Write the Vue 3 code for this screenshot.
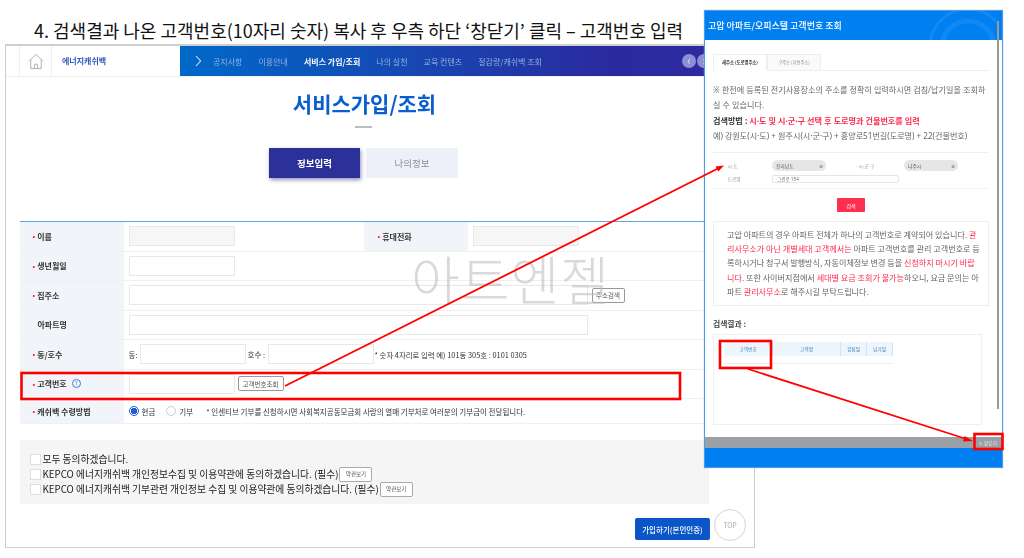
<script setup>
const navItems = [
  { label: '공지사항' },
  { label: '이용안내' },
  { label: '서비스 가입/조회', active: true },
  { label: '나의 실천' },
  { label: '교육 컨텐츠' },
  { label: '절감량/캐쉬백 조회' }
]
const columns = [
  { label: '고객번호', width: 49 },
  { label: '고객명', width: 68 },
  { label: '검침일', width: 26 },
  { label: '납기일', width: 26 }
]
const noticeLines = [
  [{ t: '고압 아파트의 경우 아파트 전체가 하나의 고객번호로 계약되어 있습니다. ' }, { t: '관', red: true }],
  [{ t: '리사무소가 아닌 개별세대 고객께서는', red: true }, { t: ' 아파트 고객번호를 관리 고객번호로 등' }],
  [{ t: '록하시거나 청구서 발행방식, 자동이체정보 변경 등을 ' }, { t: '신청하지 마시기 바랍', red: true }],
  [{ t: '니다.', red: true }, { t: ' 또한 사이버지점에서 ' }, { t: '세대별 요금 조회가 불가능', red: true }, { t: '하오니, 요금 문의는 아' }],
  [{ t: '파트 ' }, { t: '관리사무소', red: true }, { t: '로 해주시길 부탁드립니다.' }]
]
</script>

<template>
  <div class="slide">
    <h1 class="slide-title">4. 검색결과 나온 고객번호(10자리 숫자) 복사 후 우측 하단 ‘창닫기’ 클릭 – 고객번호 입력</h1>

    <section class="site">
      <header class="topbar">
        <div class="home">
          <svg width="16" height="17" viewBox="0 0 16 17" fill="none" stroke="#a9a9a9" stroke-width="0.9">
            <path d="M1 8.2 8 1.2l7 7" />
            <path d="M2.8 7v8.6h10.4V7" />
            <path d="M6.4 15.6v-4.4h3.2v4.4" />
          </svg>
        </div>
        <div class="brand">에너지캐쉬백</div>
        <nav class="nav">
          <svg class="nav-chevron" width="7" height="12" viewBox="0 0 7 12" fill="none" stroke="#cfe3ff" stroke-width="1.1">
            <path d="M1 1l4.6 5L1 11" />
          </svg>
          <span v-for="item in navItems" :key="item.label" class="nav-item" :class="{ active: item.active }">{{ item.label }}</span>
          <span class="nav-arrows">
            <i class="round">‹</i>
            <i class="round">›</i>
          </span>
        </nav>
      </header>

      <h2 class="page-title">서비스가입/조회</h2>
      <div class="title-rule"></div>

      <div class="tabs">
        <div class="tab on">정보입력</div>
        <div class="tab">나의정보</div>
      </div>

      <div class="form">
        <div class="row">
          <div class="label req">이름</div>
          <div class="cell cell-half"><span class="input short disabled"></span></div>
          <div class="label req second">휴대전화</div>
          <div class="cell"><span class="input short disabled"></span></div>
        </div>
        <div class="row">
          <div class="label req">생년월일</div>
          <div class="cell"><span class="input short"></span></div>
        </div>
        <div class="row">
          <div class="label req">집주소</div>
          <div class="cell"><span class="input long"></span><button class="mini addr">주소검색</button></div>
        </div>
        <div class="row">
          <div class="label plain">아파트명</div>
          <div class="cell"><span class="input long"></span></div>
        </div>
        <div class="row">
          <div class="label req">동/호수</div>
          <div class="cell">
            <span class="small dong-label">동:</span>
            <span class="input short"></span>
            <span class="small ho">호수 :</span>
            <span class="input short"></span>
            <span class="small note">* 숫자 4자리로 입력 예) 101동 305호 : 0101 0305</span>
          </div>
        </div>
        <div class="row">
          <div class="label req">고객번호 <span class="help">?</span></div>
          <div class="cell"><span class="input short"></span><button class="mini lookup">고객번호조회</button></div>
        </div>
        <div class="row last">
          <div class="label req">캐쉬백 수령방법</div>
          <div class="cell">
            <span class="radio checked"></span><span class="small radio-text">현금</span>
            <span class="radio second-radio"></span><span class="small radio-text">기부</span>
            <span class="small incentive">* 인센티브 기부를 신청하시면 사회복지공동모금회 사랑의 열매 기부처로 여러분의 기부금이 전달됩니다.</span>
          </div>
        </div>
      </div>

      <div class="agree">
        <div class="agree-row"><span class="check"></span>모두 동의하겠습니다.</div>
        <div class="agree-row"><span class="check"></span>KEPCO 에너지캐쉬백 개인정보수집 및 이용약관에 동의하겠습니다. (필수)<button class="terms">약관보기</button></div>
        <div class="agree-row"><span class="check"></span>KEPCO 에너지캐쉬백 기부관련 개인정보 수집 및 이용약관에 동의하겠습니다. (필수)<button class="terms">약관보기</button></div>
      </div>

      <div class="actions">
        <button class="join">가입하기(본인인증)</button>
        <div class="top">TOP</div>
      </div>

      <div class="watermark">아트엔젤</div>
    </section>

    <section class="modal">
      <header class="modal-head">
        고압 아파트/오피스텔 고객번호 조회
        <svg class="modal-deco" width="80" height="29" viewBox="0 0 80 29" fill="none" stroke="#1288f2" stroke-width="5">
          <circle cx="50" cy="36" r="26" />
          <circle cx="50" cy="36" r="38" stroke-width="3" />
        </svg>
      </header>
      <div class="modal-body">
        <div class="modal-tabs">
          <div class="modal-tab on">새주소 (도로명주소)</div>
          <div class="modal-tab">구주소 (지번주소)</div>
        </div>
        <div class="intro">
          <p>※ 한전에 등록된 전기사용장소의 주소를 정확히 입력하시면 검침/납기일을 조회하<br>실 수 있습니다.</p>
          <p><b class="dark">검색방법 : </b><b class="red">시·도 및 시·군·구 선택 후 도로명과 건물번호를 입력</b></p>
          <p>예) 강원도(시·도) + 원주시(시·군·구) + 흥양로51번길(도로명) + 22(건물번호)</p>
        </div>
        <div class="search">
          <div class="search-row">
            <span class="s-label">· 시·도</span>
            <span class="select">전라남도<i>≎</i></span>
            <span class="s-label gu">· 시·군·구</span>
            <span class="select">나주시<i>≎</i></span>
          </div>
          <div class="search-row">
            <span class="s-label">· 도로명</span>
            <span class="road">그린로 154</span>
          </div>
        </div>
        <button class="search-btn">검색</button>
        <div class="notice">
          <div v-for="(line, i) in noticeLines" :key="i" class="notice-line"><span v-for="(seg, j) in line" :key="j" :class="{ red: seg.red }">{{ seg.t }}</span></div>
        </div>
        <div class="result-title">검색결과 :</div>
        <div class="result">
          <div class="result-head">
            <span v-for="col in columns" :key="col.label" class="col" :style="{ width: col.width + 'px' }">{{ col.label }}</span>
          </div>
          <div class="result-line"></div>
        </div>
      </div>
      <div class="scroll"></div>
      <div class="close-bar"><span>× 창닫기</span></div>
      <div class="modal-foot"></div>
    </section>

    <svg class="marks" width="1024" height="558" viewBox="0 0 1024 558" fill="none">
      <rect x="21.5" y="373" width="658.5" height="26" stroke="#f00" stroke-width="2.6" />
      <rect x="720" y="341" width="51" height="27" stroke="#f00" stroke-width="2.6" />
      <rect x="974.5" y="434" width="28" height="15" stroke="#f00" stroke-width="2.6" />
      <path d="M285 386 719 168" stroke="#f00" stroke-width="1.8" />
      <path d="M724 165.500l-8.500 1 2.800 5z" fill="#f00" />
      <path d="M748 369 968 439.500" stroke="#f00" stroke-width="1.8" />
      <path d="M973 441l-8.500-5-1.600 5.400z" fill="#f00" />
    </svg>
  </div>
</template>

<style>
html, body { margin: 0; background: #fff; }
</style>

<style scoped>
* { box-sizing: border-box; }
.slide {
  position: relative;
  width: 1024px;
  height: 558px;
  overflow: hidden;
  background: #fff;
  font-family: "Noto Sans CJK KR", "Noto Sans", sans-serif;
  color: #222;
}
.slide-title {
  margin: 0;
  padding: 19px 0 0 34px;
  font-size: 18px;
  line-height: 22px;
  font-weight: 400;
  color: #111;
  white-space: nowrap;
}
.site {
  position: absolute;
  left: 5px;
  top: 44px;
  width: 750px;
  height: 504px;
  border: 1.500px solid #cfcfcf;
  border-top-width: 2px;
  background: #fff;
  filter: blur(0.3px);
}
.topbar {
  display: flex;
  height: 31px;
  border-bottom: 1px solid #eee;
}
.home {
  width: 33px;
  margin-left: 13px;
  border-left: 1px solid #eee;
  border-right: 1px solid #eee;
  display: flex;
  align-items: center;
  justify-content: center;
}
.brand {
  width: 128px;
  padding-left: 10px;
  font-size: 8px;
  line-height: 30px;
  font-weight: 700;
  color: #2c5cb8;
  white-space: nowrap;
}
.nav {
  flex: 1;
  display: flex;
  align-items: center;
  background: linear-gradient(90deg, #0069c9 0%, #2a2a9e 75%, #2e2a9e 100%);
  padding-left: 15px;
  gap: 16px;
}
.nav-chevron { margin-right: -5px; }
.nav-item {
  font-size: 8px;
  color: #8fb0de;
  white-space: nowrap;
}
.nav-item.active { color: #fff; font-weight: 700; }
.nav-arrows {
  display: flex;
  gap: 1px;
  margin-left: 124px;
}
.round {
  width: 14px;
  height: 14px;
  border-radius: 50%;
  background: #8a8fd6;
  color: #dfe2ff;
  font-style: normal;
  font-size: 12px;
  line-height: 12px;
  text-align: center;
}
.page-title {
  margin: 10px 0 0;
  width: 717px;
  text-align: center;
  font-size: 21px;
  line-height: 32px;
  font-weight: 700;
  color: #0a5fd0;
}
.title-rule {
  width: 17px;
  height: 2px;
  margin: 7px 0 0 349px;
  background: #bdbdbd;
}
.tabs {
  display: flex;
  gap: 6px;
  margin: 20px 0 0 263px;
}
.tab {
  width: 92px;
  height: 30px;
  display: flex;
  align-items: center;
  justify-content: center;
  font-size: 9.500px;
  color: #8e8e96;
  background: #edf0f8;
}
.tab.on {
  width: 91px;
  background: #2b3199;
  color: #fff;
  font-weight: 700;
  box-shadow: 1px 2px 4px rgba(40, 40, 130, 0.5);
}
.form {
  margin: 43px 0 0 13.500px;
  width: 689px;
  border-top: 1px solid #5aa7e6;
}
.row {
  display: flex;
  height: 29.500px;
  border-bottom: 1px solid #f0f0f0;
}
.row.last { height: 25px; }
.label {
  width: 104px;
  flex: none;
  background: #f1f4f8;
  display: flex;
  align-items: center;
  padding-left: 13px;
  font-size: 8px;
  font-weight: 700;
  color: #333;
  white-space: nowrap;
}
.label.req::before {
  content: "•";
  color: #f22;
  margin-right: 2px;
  font-size: 7px;
}
.label.plain { padding-left: 18px; }
.label.second { padding-left: 14px; }
.cell {
  flex: 1;
  display: flex;
  align-items: center;
  padding-left: 5px;
  position: relative;
}
.cell-half { flex: none; width: 240px; }
.input {
  display: block;
  height: 20px;
  border: 1px solid #e8e8e8;
  background: #fff;
  flex: none;
}
.input.short { width: 106px; }
.input.long { width: 459px; }
.input.disabled { background: #f6f6f6; }
.small {
  font-size: 7.500px;
  color: #333;
  white-space: nowrap;
}
.dong-label { width: 11px; flex: none; }
.ho { width: 22px; flex: none; padding-left: 2px; }
.note { margin-left: 1px; font-size: 7.400px; }
.mini {
  font: inherit;
  font-size: 6.500px;
  height: 15px;
  padding: 0;
  border: 1px solid #999;
  border-radius: 2px;
  background: #fff;
  color: #555;
  white-space: nowrap;
}
.mini.addr { width: 33px; margin-left: 4px; }
.mini.lookup { width: 46px; margin-left: 3px; }
.help {
  display: inline-block;
  width: 9px;
  height: 9px;
  margin-left: 5px;
  border: 1px solid #3f7fd8;
  border-radius: 50%;
  color: #3f7fd8;
  font-size: 6px;
  line-height: 7px;
  text-align: center;
  font-weight: 400;
}
.radio {
  width: 10px;
  height: 10px;
  border: 1px solid #ccc;
  border-radius: 50%;
  flex: none;
  background: #fff;
}
.radio.checked {
  border-color: #1f5fd0;
  background: radial-gradient(circle, #1f5fd0 0 3px, #fff 3.500px);
}
.radio-text { margin-left: 3px; }
.second-radio { margin-left: 11px; }
.incentive { margin-left: 13px; }
.agree {
  margin: 15.500px 0 0 13.500px;
  width: 689px;
  height: 64px;
  padding: 12px 10px 0;
  background: #f5f5f5;
}
.agree-row {
  display: flex;
  align-items: center;
  height: 15px;
  font-size: 9.750px;
  color: #222;
  white-space: nowrap;
}
.check {
  width: 11px;
  height: 11px;
  border: 1px solid #ddd;
  background: #fff;
  margin-right: 2px;
  flex: none;
}
.terms {
  font: inherit;
  font-size: 5.500px;
  width: 33px;
  height: 15px;
  padding: 0;
  margin-left: 1px;
  border: 1px solid #aaa;
  border-radius: 2px;
  background: #fff;
  color: #555;
}
.actions {
  display: flex;
  align-items: center;
  justify-content: flex-end;
  gap: 4px;
  margin: 5px 8px 0 0;
  height: 33px;
}
.join {
  font: inherit;
  width: 75px;
  height: 22px;
  margin-top: 8px;
  padding: 0;
  border: 0;
  border-radius: 2px;
  background: #0a56c8;
  color: #fff;
  font-size: 7.500px;
  font-weight: 500;
}
.top {
  width: 32px;
  height: 32px;
  border: 1px solid #d5d5d5;
  border-radius: 50%;
  background: #fff;
  color: #aaa;
  font-size: 7px;
  display: flex;
  align-items: center;
  justify-content: center;
}
.watermark {
  position: absolute;
  left: 405px;
  top: 202px;
  font-size: 53px;
  line-height: 60px;
  font-weight: 300;
  color: rgba(185, 185, 185, 0.55);
  letter-spacing: 1px;
  white-space: nowrap;
  pointer-events: none;
}
.modal {
  position: absolute;
  left: 704px;
  top: 10px;
  width: 299px;
  height: 458px;
  display: flex;
  flex-direction: column;
  background: #fff;
  border: 1px solid #4a9bea;
  box-shadow: 0 0 1px #aaa;
  filter: blur(0.5px);
}
.modal-head {
  position: relative;
  height: 29px;
  flex: none;
  padding-left: 3px;
  background: #0080f0;
  color: #fff;
  font-size: 9px;
  line-height: 30px;
  font-weight: 500;
  white-space: nowrap;
  overflow: hidden;
}
.modal-deco { position: absolute; right: 4px; top: 0; }
.modal-body {
  flex: 1;
  min-height: 0;
  padding: 14px 13px 0 8px;
}
.modal-tabs {
  display: flex;
  width: 276px;
  height: 17px;
  border-bottom: 1px solid #eee;
}
.modal-tab {
  width: 54px;
  height: 17px;
  border: 1px solid #eee;
  background: #fafafa;
  font-size: 4.300px;
  line-height: 15px;
  text-align: center;
  color: #888;
  white-space: nowrap;
}
.modal-tab.on {
  background: #fff;
  border-bottom-color: #fff;
  color: #333;
  font-weight: 700;
}
.intro {
  margin-top: 11px;
  width: 276px;
  height: 71px;
  border-bottom: 1px solid #f0f0f0;
  font-family: "Noto Sans", "Noto Sans CJK KR", sans-serif;
  font-size: 8.100px;
  line-height: 15.400px;
  color: #666;
  white-space: nowrap;
}
.intro p { margin: 0; }
.dark { color: #333; font-weight: 700; }
.red { color: #ff2a4d; }
b.red { font-weight: 700; }
.search {
  width: 276px;
  height: 36px;
  padding: 6px 0 0 12px;
  border-bottom: 1px solid #f3f3f3;
  font-family: "Noto Sans", "Noto Sans CJK KR", sans-serif;
}
.search-row {
  display: flex;
  align-items: center;
  height: 13px;
}
.s-label {
  width: 47px;
  font-size: 4.800px;
  color: #999;
  white-space: nowrap;
}
.s-label.gu { width: 48px; margin-left: 30px; }
.select {
  width: 54px;
  height: 11px;
  padding: 0 3px 0 4px;
  display: flex;
  justify-content: space-between;
  align-items: center;
  border-radius: 6px;
  background: #e6e6e6;
  font-size: 4.800px;
  color: #555;
}
.select i { font-style: normal; }
.road {
  width: 127px;
  height: 8px;
  padding-left: 4px;
  border: 1px solid #e5e5e5;
  border-radius: 2px;
  font-size: 4.600px;
  line-height: 6px;
  color: #666;
}
.search-btn {
  display: block;
  font: inherit;
  width: 28px;
  height: 14px;
  margin: 9px 0 0 124px;
  padding: 0;
  border: 0;
  border-radius: 1px;
  background: #ff2f50;
  color: #fff;
  font-size: 5px;
}
.notice {
  width: 276px;
  height: 85px;
  margin-top: 9px;
  padding: 6px 0 0 13px;
  border: 1px solid #eee;
  font-size: 8.100px;
  line-height: 14.200px;
  color: #666;
}
.notice-line { white-space: nowrap; }
.result-title {
  margin-top: 11px;
  font-size: 7.800px;
  line-height: 14px;
  font-weight: 700;
  color: #444;
}
.result {
  width: 269px;
  height: 91px;
  margin-top: 3px;
  padding: 7px 10px 0;
  border: 1px solid #f0f0f0;
}
.result-head { display: flex; height: 14px; }
.col {
  height: 14px;
  background: #eef6fd;
  border-right: 1px solid #cfe4f6;
  font-size: 4.800px;
  line-height: 14px;
  text-align: center;
  color: #3e7fb8;
}
.result-line {
  width: 169px;
  height: 1px;
  margin-top: 7px;
  background: #e3f0fa;
}
.scroll {
  position: absolute;
  right: 3px;
  top: 10px;
  width: 2px;
  height: 388px;
  background: #9a9a9a;
}
.close-bar {
  height: 11px;
  flex: none;
  background: #9aa0a6;
  color: #e8e8e8;
  font-size: 4.800px;
  line-height: 11px;
  text-align: right;
  padding-right: 5px;
}
.modal-foot {
  height: 19px;
  flex: none;
  background: #0080f0;
}
.marks {
  position: absolute;
  inset: 0;
  pointer-events: none;
}
</style>
